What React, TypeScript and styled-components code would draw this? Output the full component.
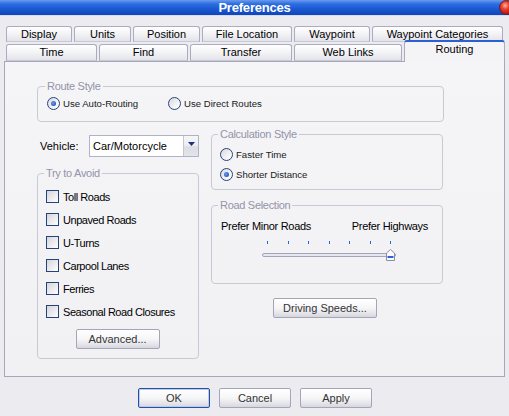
import React from 'react';
import styled, { createGlobalStyle } from 'styled-components';

const font = `"Liberation Sans", Arial, Helvetica, sans-serif`;

const GlobalStyle = createGlobalStyle`
  html, body {
    margin: 0;
    padding: 0;
    background: #ecebf0;
  }
  * {
    box-sizing: border-box;
  }
`;

const Window = styled.div`
  position: relative;
  width: 509px;
  height: 416px;
  overflow: hidden;
  background: #ecebf0;
  font-family: ${font};
  font-size: 11px;
  color: #000;
`;

const TitleBar = styled.div`
  position: relative;
  height: 16px;
  background: linear-gradient(#6a9bec 0%, #2f6fe0 25%, #1a58d2 60%, #0f46b8 100%);
  border-bottom: 1px solid #d8dcec;
  display: flex;
  align-items: center;
  justify-content: center;
`;

const Title = styled.span`
  color: #fff;
  font-weight: bold;
  font-size: 13px;
  letter-spacing: -0.2px;
  line-height: 15px;
`;

const CloseBall = styled.span`
  position: absolute;
  right: -5px;
  top: 0px;
  width: 15px;
  height: 15px;
  border-radius: 50%;
  background: radial-gradient(circle at 40% 35%, #ffb0a0 0%, #e83a28 35%, #a81408 80%, #700a04 100%);
  border: 1px solid #6a1c2c;
`;

const TabArea = styled.div`
  padding-top: 10px;
`;

const TabRow = styled.div<{ $gapTop: number }>`
  display: flex;
  gap: 2px;
  margin-left: 6px;
  margin-top: ${p => p.$gapTop}px;
  align-items: flex-start;
`;

const Tab = styled.div<{ $w: number; $h: number; $active?: boolean }>`
  width: ${p => p.$w}px;
  height: ${p => (p.$active ? p.$h + 5 : p.$h)}px;
  margin-top: ${p => (p.$active ? -4 : 0)}px;
  margin-bottom: ${p => (p.$active ? -1 : 0)}px;
  position: relative;
  z-index: ${p => (p.$active ? 2 : 1)};
  display: flex;
  align-items: center;
  justify-content: center;
  padding-bottom: ${p => (p.$active ? 5 : 0)}px;
  border: 1px solid #acacc0;
  border-bottom: ${p => (p.$active ? 'none' : '1px solid #c8c8d6')};
  border-top: ${p => (p.$active ? '2px solid #2b5fd6' : '1px solid #acacc0')};
  border-radius: 3px 3px 0 0;
  background: ${p =>
    p.$active
      ? '#f4f4f7'
      : 'linear-gradient(#ffffff 0%, #f3f3f6 50%, #e2e2ea 100%)'};
  font-size: 11px;
  line-height: 13px;
  white-space: nowrap;
`;

const Panel = styled.div`
  margin: 0 4px;
  height: 316px;
  border: 1px solid #a7a7ba;
  background: linear-gradient(#f5f5f8 0%, #f1f1f4 100%);
  padding: 18px 0 0 32px;
`;

const Group = styled.fieldset<{ $w: number; $pad: number }>`
  margin: 0;
  width: ${p => p.$w}px;
  min-inline-size: 0;
  border: 1px solid #c9c9d6;
  border-radius: 4px;
  padding: 0 8px 0 ${p => p.$pad}px;
`;

const Legend = styled.legend`
  margin-left: -2px;
  padding: 0 2px;
  color: #9393a8;
  font-size: 11px;
  line-height: 13px;
  letter-spacing: -0.3px;
`;

const RouteRow = styled.div`
  display: flex;
  align-items: center;
  height: 20px;
  margin-bottom: 8px;
`;

const RadioItem = styled.label<{ $w?: number }>`
  display: flex;
  align-items: center;
  gap: 3px;
  height: 20px;
  width: ${p => (p.$w ? `${p.$w}px` : 'auto')};
  font-size: 9.6px;
  color: #202020;
`;

const RadioDot = styled.span<{ $checked?: boolean }>`
  position: relative;
  width: 13px;
  height: 13px;
  flex: none;
  border-radius: 50%;
  border: 1px solid #24437a;
  background: linear-gradient(135deg, #d8d8dc 0%, #f4f4f6 60%, #ffffff 100%);

  &::after {
    content: '';
    display: ${p => (p.$checked ? 'block' : 'none')};
    position: absolute;
    left: 3px;
    top: 3px;
    width: 5px;
    height: 5px;
    border-radius: 50%;
    background: radial-gradient(circle at 40% 40%, #6d9cf0 0%, #2559c8 70%, #1a44a0 100%);
  }
`;

const Columns = styled.div`
  display: flex;
  gap: 12px;
  margin-top: 6px;
  align-items: flex-start;
`;

const LeftCol = styled.div`
  width: 162px;
  display: flex;
  flex-direction: column;
`;

const RightCol = styled.div`
  width: 232px;
  display: flex;
  flex-direction: column;
`;

const VehicleRow = styled.div`
  display: flex;
  align-items: center;
  height: 22px;
  margin-top: 7px;
  margin-bottom: 10px;
  padding-left: 3px;
`;

const VehicleLabel = styled.span`
  width: 49px;
  font-size: 11px;
`;

const Select = styled.div`
  width: 110px;
  height: 22px;
  display: flex;
  border: 1px solid #b2b2c6;
  background: #fff;
`;

const SelectText = styled.span`
  flex: 1;
  padding-left: 3px;
  line-height: 20px;
  font-size: 11px;
`;

const SelectArrow = styled.span`
  width: 15px;
  border-left: 1px solid #c4c4d4;
  background: linear-gradient(#f6f6f8 0%, #eeeef2 45%, #dcdce4 55%, #e4e4ea 100%);
  display: flex;
  justify-content: center;
  padding-top: 6px;
`;

const CheckList = styled.div`
  display: flex;
  flex-direction: column;
  padding-top: 5px;
`;

const CheckRow = styled.label`
  display: flex;
  align-items: center;
  gap: 4px;
  height: 23px;
  font-size: 11px;
  letter-spacing: -0.45px;
`;

const CheckBox = styled.span`
  width: 13px;
  height: 13px;
  flex: none;
  border: 1px solid #24437a;
  background: linear-gradient(135deg, #d4d4da 0%, #ececf0 55%, #ffffff 100%);
`;

const Button = styled.div<{ $w: number; $default?: boolean }>`
  width: ${p => p.$w}px;
  height: 20px;
  display: flex;
  align-items: center;
  justify-content: center;
  border: 1px solid ${p => (p.$default ? '#2a4f9c' : '#a5a5b8')};
  border-radius: 2px;
  background: linear-gradient(#ffffff 0%, #f6f6f8 50%, #e4e4ea 80%, #d6d6de 100%);
  box-shadow: ${p => (p.$default ? 'inset 0 0 0 1px #b8ccf0' : 'none')};
  font-size: 11px;
  color: #333;
`;

const AdvancedWrap = styled.div`
  display: flex;
  justify-content: center;
  margin-top: 6px;
  margin-bottom: 9px;
  margin-left: -1px;
`;

const CalcList = styled.div`
  display: flex;
  flex-direction: column;
  padding-top: 3px;
  padding-bottom: 5px;
`;

const RoadGroupWrap = styled.div`
  margin-top: 9px;
`;

const RoadLabels = styled.div`
  display: flex;
  justify-content: space-between;
  padding: 8px 6px 0 1px;
  font-size: 11px;
  line-height: 13px;
  letter-spacing: -0.3px;
`;

const Ticks = styled.div`
  display: flex;
  justify-content: space-between;
  width: 124px;
  margin: 8px 0 0 47px;
`;

const Tick = styled.span`
  width: 1px;
  height: 3px;
  background: #1f66e0;
`;

const SliderArea = styled.div`
  position: relative;
  width: 134px;
  height: 10px;
  margin: 6px 0 23px 42px;
  display: flex;
  align-items: center;
`;

const Track = styled.div`
  width: 134px;
  height: 4px;
  border: 1px solid #a4a4bc;
  border-radius: 2px;
  background: #e6e6ee;
`;

const Thumb = styled.svg`
  position: absolute;
  left: 124px;
  top: -1px;
`;

const SpeedsWrap = styled.div`
  display: flex;
  justify-content: center;
  margin-top: 14px;
  margin-left: -4px;
`;

const Footer = styled.div`
  display: flex;
  justify-content: center;
  gap: 9px;
  margin-top: 11px;
  padding-left: 1px;
`;

const avoid = [
  'Toll Roads',
  'Unpaved Roads',
  'U-Turns',
  'Carpool Lanes',
  'Ferries',
  'Seasonal Road Closures',
];

const rowOne = [
  { label: 'Display', w: 66 },
  { label: 'Units', w: 57 },
  { label: 'Position', w: 67 },
  { label: 'File Location', w: 90 },
  { label: 'Waypoint', w: 76 },
  { label: 'Waypoint Categories', w: 131 },
];

const rowTwo = [
  { label: 'Time', w: 91 },
  { label: 'Find', w: 89 },
  { label: 'Transfer', w: 102 },
  { label: 'Web Links', w: 108 },
  { label: 'Routing', w: 101, active: true },
];

const App: React.FC = () => {
  return (
    <Window>
      <GlobalStyle />
      <TitleBar>
        <Title>Preferences</Title>
        <CloseBall />
      </TitleBar>

      <TabArea>
        <TabRow $gapTop={0}>
          {rowOne.map(t => (
            <Tab key={t.label} $w={t.w} $h={16}>
              {t.label}
            </Tab>
          ))}
        </TabRow>
        <TabRow $gapTop={2}>
          {rowTwo.map(t => (
            <Tab key={t.label} $w={t.w} $h={17} $active={t.active}>
              {t.label}
            </Tab>
          ))}
        </TabRow>
      </TabArea>

      <Panel>
        <Group $w={407} $pad={9}>
          <Legend>Route Style</Legend>
          <RouteRow>
            <RadioItem $w={121}>
              <RadioDot $checked />
              Use Auto-Routing
            </RadioItem>
            <RadioItem>
              <RadioDot />
              Use Direct Routes
            </RadioItem>
          </RouteRow>
        </Group>

        <Columns>
          <LeftCol>
            <VehicleRow>
              <VehicleLabel>Vehicle:</VehicleLabel>
              <Select>
                <SelectText>Car/Motorcycle</SelectText>
                <SelectArrow>
                  <svg width="7" height="4" viewBox="0 0 7 4">
                    <path d="M0 0 H7 L3.5 4 Z" fill="#1f2f80" />
                  </svg>
                </SelectArrow>
              </Select>
            </VehicleRow>

            <Group $w={162} $pad={8}>
              <Legend>Try to Avoid</Legend>
              <CheckList>
                {avoid.map(a => (
                  <CheckRow key={a}>
                    <CheckBox />
                    {a}
                  </CheckRow>
                ))}
              </CheckList>
              <AdvancedWrap>
                <Button $w={84}>Advanced...</Button>
              </AdvancedWrap>
            </Group>
          </LeftCol>

          <RightCol>
            <Group $w={232} $pad={8}>
              <Legend>Calculation Style</Legend>
              <CalcList>
                <RadioItem>
                  <RadioDot />
                  Faster Time
                </RadioItem>
                <RadioItem>
                  <RadioDot $checked />
                  Shorter Distance
                </RadioItem>
              </CalcList>
            </Group>

            <RoadGroupWrap>
              <Group $w={232} $pad={8}>
                <Legend>Road Selection</Legend>
                <RoadLabels>
                  <span>Prefer Minor Roads</span>
                  <span>Prefer Highways</span>
                </RoadLabels>
                <Ticks>
                  {Array.from({ length: 7 }).map((_, i) => (
                    <Tick key={i} />
                  ))}
                </Ticks>
                <SliderArea>
                  <Track />
                  <Thumb width="9" height="12" viewBox="0 0 9 12">
                    <path
                      d="M0.5 4 L4.5 0.5 L8.5 4 V11.5 H0.5 Z"
                      fill="#fafafc"
                      stroke="#8c8ca4"
                    />
                    <rect x="1.5" y="7" width="6" height="2" fill="#2a64d4" />
                  </Thumb>
                </SliderArea>
              </Group>
            </RoadGroupWrap>

            <SpeedsWrap>
              <Button $w={104}>Driving Speeds...</Button>
            </SpeedsWrap>
          </RightCol>
        </Columns>
      </Panel>

      <Footer>
        <Button $w={72} $default>
          OK
        </Button>
        <Button $w={72}>Cancel</Button>
        <Button $w={72}>Apply</Button>
      </Footer>
    </Window>
  );
};

export default App;
